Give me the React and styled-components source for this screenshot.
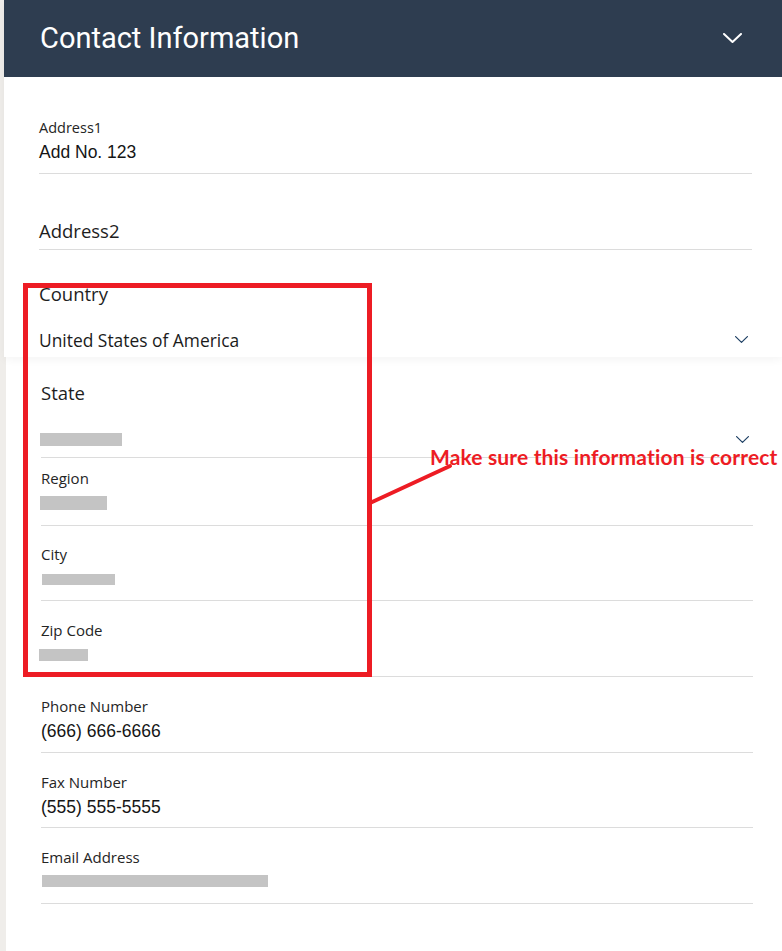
import React from "react";
import styled, { createGlobalStyle } from "styled-components";

const GlobalStyle = createGlobalStyle`
  html, body {
    margin: 0;
    padding: 0;
    background: #efedea;
  }
  body {
    font-family: "Open Sans", sans-serif;
    -webkit-font-smoothing: antialiased;
  }
  * { box-sizing: border-box; }
`;

const Page = styled.div`
  position: relative;
  width: 782px;
  min-height: 951px;
  display: flex;
  flex-direction: column;
  overflow: hidden;
`;

const TopCard = styled.section`
  position: relative;
  z-index: 2;
  margin-left: 4px;
  background: #ffffff;
  box-shadow: 0 3px 8px rgba(0, 0, 0, 0.045);
`;

const BottomCard = styled.section`
  position: relative;
  z-index: 1;
  flex: 1;
  margin-left: 6px;
  background: #ffffff;
  padding: 0 29px 40px 35px;
`;

const Header = styled.header`
  height: 77px;
  background: #2e3d50;
  display: flex;
  align-items: center;
  justify-content: space-between;
  padding: 0 40px 2px 36px;
`;

const Title = styled.h1`
  margin: 0;
  font-family: Roboto, "Liberation Sans", sans-serif;
  font-weight: 400;
  font-size: 29px;
  line-height: 34px;
  color: #ffffff;
`;

const TopFields = styled.div`
  padding: 0 30px 0 35px;
`;

const Field = styled.div`
  display: flex;
  flex-direction: column;
  padding-top: ${(p) => p.$pt}px;
  padding-bottom: ${(p) => p.$pb}px;
  gap: ${(p) => p.$gap ?? 5.5}px;
  border-bottom: ${(p) => (p.$noLine ? "none" : "1px solid #dcdcdc")};
`;

const SmallLabel = styled.label`
  font-family: "Open Sans", sans-serif;
  font-size: ${(p) => p.$size ?? 15}px;
  line-height: 18px;
  color: #252525;
`;

const BigLabel = styled.label`
  font-family: "Open Sans", sans-serif;
  font-size: 18.5px;
  line-height: 22px;
  color: #1e1e1e;
`;

const Value = styled.div`
  font-family: "Liberation Sans", Arial, sans-serif;
  font-size: 17.5px;
  line-height: 22px;
  height: 22px;
  color: #151515;
`;

const SelectRow = styled.div`
  display: flex;
  align-items: center;
  justify-content: space-between;
  height: 22px;
  padding-right: 4px;
`;

const SelectText = styled.span`
  font-family: "Open Sans", sans-serif;
  font-size: 17.4px;
  line-height: 22px;
  color: #1b1b1b;
`;

const Redacted = styled.span`
  display: block;
  width: ${(p) => p.$w}px;
  height: ${(p) => p.$h}px;
  margin-top: ${(p) => p.$mt}px;
  margin-left: ${(p) => p.$ml ?? 0}px;
  background: #c4c4c4;
`;

const RedactedSlot = styled.div`
  height: 22px;
`;

const AnnotationBox = styled.div`
  position: absolute;
  z-index: 5;
  left: 23px;
  top: 283px;
  width: 349px;
  height: 394px;
  border: 5px solid #ed1c24;
  pointer-events: none;
`;

const AnnotationPointer = styled.svg`
  position: absolute;
  z-index: 5;
  left: 368px;
  top: 462px;
  overflow: visible;
`;

const AnnotationText = styled.div`
  position: absolute;
  z-index: 6;
  left: 430px;
  top: 444px;
  font-family: Lato, "Liberation Sans", sans-serif;
  font-weight: 700;
  font-size: 21px;
  line-height: 25px;
  letter-spacing: 0.15px;
  color: #ed1c24;
  white-space: nowrap;
`;

const Chevron = ({ color = "#1d3f63", w = 13, h = 7, sw = 1.2 }) => (
  <svg width={w} height={h} viewBox={`0 0 ${w} ${h}`} fill="none">
    <polyline
      points={`${sw / 2},${sw / 2} ${w / 2},${h - sw / 2} ${w - sw / 2},${sw / 2}`}
      stroke={color}
      strokeWidth={sw}
      strokeLinecap="round"
      strokeLinejoin="round"
    />
  </svg>
);

export default function App() {
  return (
    <>
      <GlobalStyle />
      <Page>
        <TopCard>
          <Header>
            <Title>Contact Information</Title>
            <Chevron color="#ffffff" w={19} h={10} sw={2} />
          </Header>
          <TopFields>
            <Field $pt={42} $pb={10.5} $gap={3.5}>
              <SmallLabel $size={14.5}>Address1</SmallLabel>
              <Value>Add No. 123</Value>
            </Field>
            <Field $pt={46} $pb={7} $gap={0}>
              <BigLabel>Address2</BigLabel>
            </Field>
            <Field $pt={33} $pb={6.5} $gap={23.5} $noLine>
              <BigLabel>Country</BigLabel>
              <SelectRow>
                <SelectText>United States of America</SelectText>
                <Chevron />
              </SelectRow>
            </Field>
          </TopFields>
        </TopCard>

        <BottomCard>
          <Field $pt={25} $pb={7} $gap={24}>
            <BigLabel>State</BigLabel>
            <SelectRow>
              <Redacted $w={82} $h={13} $mt={0} $ml={-1} />
              <Chevron />
            </SelectRow>
          </Field>
          <Field $pt={11} $pb={11} $gap={5}>
            <SmallLabel>Region</SmallLabel>
            <RedactedSlot>
              <Redacted $w={67} $h={14} $mt={4} $ml={-1} />
            </RedactedSlot>
          </Field>
          <Field $pt={18.5} $pb={10}>
            <SmallLabel>City</SmallLabel>
            <RedactedSlot>
              <Redacted $w={73} $h={11} $mt={5.5} $ml={1} />
            </RedactedSlot>
          </Field>
          <Field $pt={19.5} $pb={10}>
            <SmallLabel>Zip Code</SmallLabel>
            <RedactedSlot>
              <Redacted $w={49} $h={12} $mt={4.5} $ml={-2} />
            </RedactedSlot>
          </Field>
          <Field $pt={19.5} $pb={10}>
            <SmallLabel>Phone Number</SmallLabel>
            <Value>(666) 666-6666</Value>
          </Field>
          <Field $pt={19.5} $pb={9}>
            <SmallLabel>Fax Number</SmallLabel>
            <Value>(555) 555-5555</Value>
          </Field>
          <Field $pt={19.5} $pb={10}>
            <SmallLabel>Email Address</SmallLabel>
            <RedactedSlot>
              <Redacted $w={226} $h={12} $mt={4} $ml={1} />
            </RedactedSlot>
          </Field>
        </BottomCard>

        <AnnotationBox />
        <AnnotationPointer width="86" height="46" viewBox="0 0 86 46">
          <line x1="2" y1="41" x2="82" y2="4" stroke="#ed1c24" strokeWidth="4" strokeLinecap="round" />
        </AnnotationPointer>
        <AnnotationText>Make sure this information is correct</AnnotationText>
      </Page>
    </>
  );
}
